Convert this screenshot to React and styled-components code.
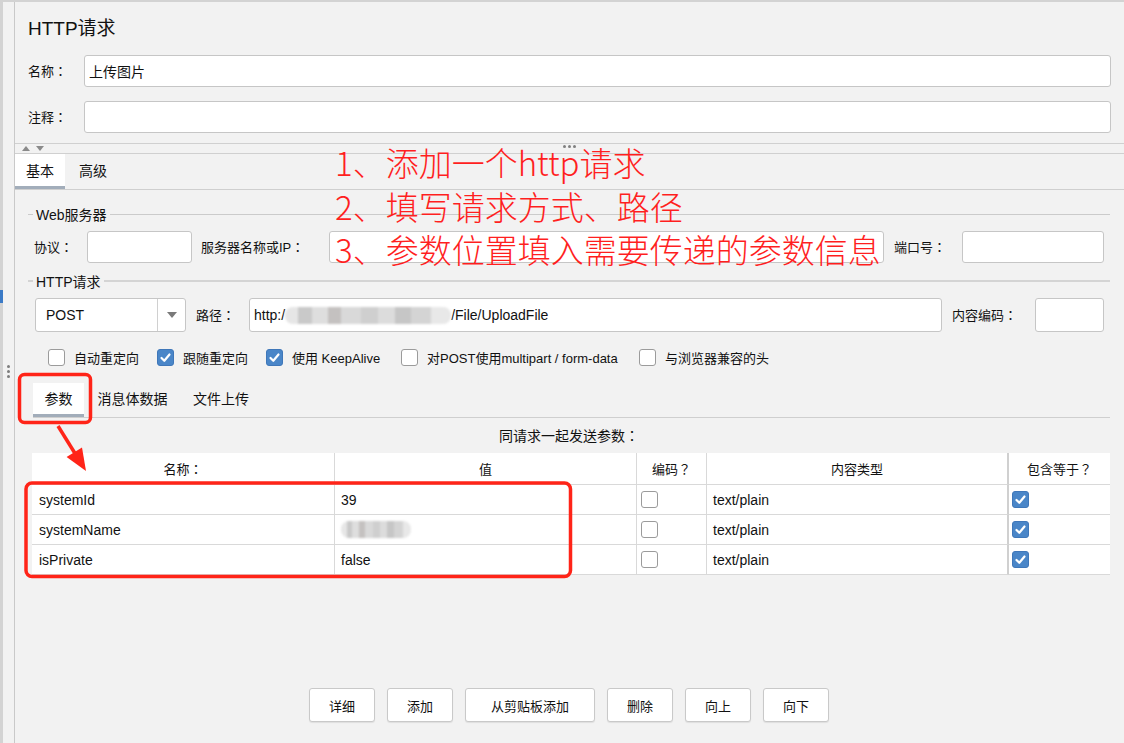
import React from "react";
import styled, { createGlobalStyle } from "styled-components";

const GlobalStyle = createGlobalStyle`
  html, body {
    margin: 0;
    padding: 0;
    background: #f2f2f2;
  }
  body {
    font-family: "Liberation Sans", "Noto Sans CJK SC", sans-serif;
    color: #111;
  }
  * {
    box-sizing: border-box;
  }
`;

const Page = styled.div`
  position: relative;
  width: 1124px;
  height: 743px;
  display: flex;
  border-top: 2px solid #d3d3d3;
  background: #f2f2f2;
  overflow: hidden;
`;

const Rail = styled.div`
  position: relative;
  flex: none;
  width: 15px;
  border-left: 3px solid #d3d3d3;
  border-right: 1px solid #c9c9c9;
  display: flex;
  flex-direction: column;
  align-items: center;

  &::before {
    content: "";
    position: absolute;
    left: -3px;
    top: 288px;
    width: 3px;
    height: 13px;
    background: #3b7ac6;
  }
`;

const RailGrip = styled.div`
  margin-top: 363px;
  display: flex;
  flex-direction: column;
  gap: 2px;
  > span {
    width: 3px;
    height: 3px;
    border-radius: 50%;
    background: #7d7d7d;
  }
`;

const Main = styled.div`
  flex: 1;
  min-width: 0;
  display: flex;
  flex-direction: column;
`;

const Header = styled.div`
  padding: 15px 13px 10px 13px;
`;

const Title = styled.div`
  font-size: 19px;
  line-height: 24px;
  height: 24px;
`;

const Row = styled.div`
  display: flex;
  align-items: center;
  margin-top: ${p => p.top || 0}px;
`;

const Label = styled.span`
  flex: none;
  width: ${p => p.w}px;
  margin-left: ${p => p.ml || 0}px;
  padding-bottom: 2px;
  font-size: 13px;
  white-space: nowrap;
`;

// full-width punctuation sits centred in its cell, as in the Swing UI
const Punct = styled.span`
  font-family: "Noto Sans CJK TC", "Noto Sans CJK SC", sans-serif;
`;

const TextBox = styled.div`
  flex: ${p => (p.w ? "none" : "1")};
  width: ${p => (p.w ? `${p.w}px` : "auto")};
  height: ${p => p.h || 32}px;
  display: flex;
  align-items: center;
  padding: 0 4px;
  background: #fff;
  border: 1px solid #c6c6c6;
  border-radius: 3px;
  font-size: 14px;
  white-space: nowrap;
  overflow: hidden;
`;

const Redacted = styled.span`
  display: inline-block;
  width: ${p => p.w}px;
  height: 17px;
  border-radius: 8px;
  background: linear-gradient(
    90deg,
    #e6e6e6 0 8%,
    #c9c9c9 8% 16%,
    #dedede 16% 26%,
    #c4c1c0 26% 34%,
    #d9d9d9 34% 46%,
    #cfcfcf 46% 56%,
    #dcdcdc 56% 66%,
    #c6c6c6 66% 76%,
    #d4d4d4 76% 88%,
    #e8e8e8 88% 100%
  );
  filter: blur(1.2px);
`;

const SplitBar = styled.div`
  height: 11px;
  border-top: 1px solid #d0d0d0;
  border-bottom: 1px solid #d0d0d0;
  display: grid;
  grid-template-columns: 1fr auto 1fr;
  align-items: center;
`;

const Arrows = styled.div`
  display: flex;
  gap: 6px;
  padding-left: 7px;
`;

const Tri = styled.span`
  width: 0;
  height: 0;
  border-left: 4px solid transparent;
  border-right: 4px solid transparent;
  ${p =>
    p.down
      ? "border-top: 5px solid #8a8a8a;"
      : "border-bottom: 5px solid #8a8a8a;"}
`;

const Dots = styled.div`
  display: flex;
  gap: 2px;
  margin-top: -4px;
  > span {
    width: 3px;
    height: 3px;
    border-radius: 50%;
    background: #808080;
  }
`;

const TabBar = styled.div`
  display: flex;
  height: 36px;
  border-bottom: 1px solid #cfcfcf;
`;

const Tab = styled.div`
  width: ${p => p.w}px;
  display: flex;
  align-items: center;
  justify-content: center;
  padding-bottom: 4px;
  font-size: 14px;
  background: ${p => (p.active ? "#fff" : "transparent")};
  box-shadow: ${p => (p.active ? "inset 0 -3px 0 #a2adba" : "none")};
`;

const Body = styled.div`
  flex: 1;
  display: flex;
  flex-direction: column;
  padding: 0 14px 21px 13px;
`;

const Group = styled.div`
  margin-top: ${p => p.top}px;
  padding: 0 6px;
`;

const GroupHead = styled.div`
  display: flex;
  align-items: center;
  height: 20px;
  margin: 0 -6px;
  font-size: 14px;

  &::before,
  &::after {
    content: "";
    height: ${p => (p.thick ? 2 : 1)}px;
    background: ${p => (p.thick ? "#d4d4d4" : "#cbcbcb")};
  }
  &::before {
    width: 5px;
  }
  &::after {
    flex: 1;
  }
  > span {
    padding: 0 3px;
  }
`;

const Combo = styled.div`
  flex: none;
  width: 151px;
  height: 34px;
  margin-left: 1px;
  display: flex;
  background: #fff;
  border: 1px solid #c6c6c6;
  border-radius: 3px;
  font-size: 14px;

  > span {
    flex: 1;
    display: flex;
    align-items: center;
    padding-left: 10px;
  }
`;

const ComboArrow = styled.div`
  width: 28px;
  border-left: 1px solid #d0d0d0;
  display: flex;
  align-items: center;
  justify-content: center;

  &::after {
    content: "";
    border-left: 5px solid transparent;
    border-right: 5px solid transparent;
    border-top: 6px solid #7a7a7a;
  }
`;

const CheckRow = styled.div`
  display: flex;
  align-items: center;
  height: 17px;
  margin-top: 17px;
  padding-left: 20px;
`;

const CheckItem = styled.div`
  flex: none;
  width: ${p => (p.w ? `${p.w}px` : "auto")};
  display: flex;
  align-items: center;
  gap: 9px;
  font-size: 13px;
  white-space: nowrap;
`;

const Box = styled.span`
  flex: none;
  width: 17px;
  height: 17px;
  border-radius: 3px;
  border: 1px solid ${p => (p.checked ? "#3f77b9" : "#9b9b9b")};
  background: ${p => (p.checked ? "#4a86c8" : "#fff")};
  display: inline-flex;
  align-items: center;
  justify-content: center;
`;

const Check = ({ checked }) => (
  <Box checked={checked}>
    {checked && (
      <svg width="13" height="13" viewBox="0 0 13 13">
        <polyline
          points="2.5,7 5.3,9.8 10.5,3.5"
          fill="none"
          stroke="#fff"
          strokeWidth="2.2"
          strokeLinecap="round"
          strokeLinejoin="round"
        />
      </svg>
    )}
  </Box>
);

const SubTabs = styled(TabBar)`
  margin-top: 17px;
  height: 35px;
  margin-left: 5px;
`;

const Caption = styled.div`
  height: 35px;
  line-height: 35px;
  text-align: center;
  font-size: 14px;
`;

const Grid = styled.div`
  display: grid;
  grid-template-columns: 303px 302px 70px 302px 101px;
  width: 1078px;
  margin-left: 4px;
  background: #fff;
`;

const divider = p =>
  p.last ? "none" : p.thick ? "2px solid #d0d0d0" : "1px solid #d9d9d9";

const HeadCell = styled.div`
  height: 32px;
  display: flex;
  align-items: center;
  justify-content: center;
  font-size: 13px;
  border-bottom: 1px solid #d9d9d9;
  border-right: ${divider};
`;

const Cell = styled.div`
  height: 30px;
  display: flex;
  align-items: center;
  padding-left: ${p => (p.pad === undefined ? 6 : p.pad)}px;
  font-size: 14px;
  border-bottom: 1px solid #d9d9d9;
  border-right: ${divider};
`;

const ButtonRow = styled.div`
  margin-top: auto;
  display: flex;
  justify-content: center;
  gap: 12px;
`;

const Button = styled.div`
  width: ${p => p.w || 66}px;
  height: 34px;
  display: flex;
  align-items: center;
  justify-content: center;
  background: #fff;
  border: 1px solid #c9c9c9;
  border-radius: 3px;
  box-shadow: 0 1px 1px rgba(0, 0, 0, 0.08);
  font-size: 13px;
`;

const Overlay = styled.div`
  position: absolute;
  inset: -2px 0 0 0;
  pointer-events: none;
`;

const Notes = styled.div`
  position: absolute;
  left: 335px;
  top: 141px;
  font-family: "Noto Sans CJK SC", "Liberation Sans", sans-serif;
  font-size: 33px;
  font-weight: 300;
  line-height: 43.5px;
  color: #ff1f1f;
  white-space: nowrap;
`;

const Marks = styled.svg`
  position: absolute;
  left: 0;
  top: 0;
`;

const params = [
  { name: "systemId", value: "39" },
  { name: "systemName", value: null },
  { name: "isPrivate", value: "false" }
];

const buttons = [
  { label: "详细" },
  { label: "添加" },
  { label: "从剪贴板添加", w: 130 },
  { label: "删除" },
  { label: "向上" },
  { label: "向下" }
];

const C = () => <Punct>：</Punct>;
const Q = () => <Punct>？</Punct>;

export default function App() {
  return (
    <>
      <GlobalStyle />
      <Page>
        <Rail>
          <RailGrip>
            <span />
            <span />
            <span />
          </RailGrip>
        </Rail>
        <Main>
          <Header>
            <Title>HTTP请求</Title>
            <Row top={14}>
              <Label w={56}>
                名称<C />
              </Label>
              <TextBox>上传图片</TextBox>
            </Row>
            <Row top={14}>
              <Label w={56}>
                注释<C />
              </Label>
              <TextBox />
            </Row>
          </Header>

          <SplitBar>
            <Arrows>
              <Tri />
              <Tri down />
            </Arrows>
            <Dots>
              <span />
              <span />
              <span />
            </Dots>
            <div />
          </SplitBar>

          <TabBar>
            <Tab w={50} active>
              基本
            </Tab>
            <Tab w={56}>高级</Tab>
          </TabBar>

          <Body>
            <Group top={14}>
              <GroupHead>
                <span>Web服务器</span>
              </GroupHead>
              <Row top={7}>
                <Label w={53}>
                  协议<C />
                </Label>
                <TextBox w={105} />
                <Label w={128} ml={9}>
                  服务器名称或IP<C />
                </Label>
                <TextBox w={555} />
                <Label w={68} ml={10}>
                  端口号<C />
                </Label>
                <TextBox />
              </Row>
            </Group>

            <Group top={8}>
              <GroupHead thick>
                <span>HTTP请求</span>
              </GroupHead>
              <Row top={7}>
                <Combo>
                  <span>POST</span>
                  <ComboArrow />
                </Combo>
                <Label w={53} ml={10}>
                  路径<C />
                </Label>
                <TextBox w={693} h={34}>
                  http:/
                  <Redacted w={166} />
                  /File/UploadFile
                </TextBox>
                <Label w={83} ml={10}>
                  内容编码<C />
                </Label>
                <TextBox h={34} />
              </Row>
            </Group>

            <CheckRow>
              <CheckItem w={109}>
                <Check />
                自动重定向
              </CheckItem>
              <CheckItem w={109}>
                <Check checked />
                跟随重定向
              </CheckItem>
              <CheckItem w={135}>
                <Check checked />
                使用 KeepAlive
              </CheckItem>
              <CheckItem w={238}>
                <Check />
                对POST使用multipart / form-data
              </CheckItem>
              <CheckItem>
                <Check />
                与浏览器兼容的头
              </CheckItem>
            </CheckRow>

            <SubTabs>
              <Tab w={51} active>
                参数
              </Tab>
              <Tab w={97}>消息体数据</Tab>
              <Tab w={80}>文件上传</Tab>
            </SubTabs>

            <Caption>
              同请求一起发送参数<C />
            </Caption>

            <Grid>
              <HeadCell>
                名称<C />
              </HeadCell>
              <HeadCell>值</HeadCell>
              <HeadCell>
                编码<Q />
              </HeadCell>
              <HeadCell thick>内容类型</HeadCell>
              <HeadCell last>
                包含等于<Q />
              </HeadCell>
              {params.map(p => (
                <React.Fragment key={p.name}>
                  <Cell pad={7}>{p.name}</Cell>
                  <Cell>{p.value ?? <Redacted w={70} />}</Cell>
                  <Cell pad={4}>
                    <Check />
                  </Cell>
                  <Cell thick>text/plain</Cell>
                  <Cell last pad={3}>
                    <Check checked />
                  </Cell>
                </React.Fragment>
              ))}
            </Grid>

            <ButtonRow>
              {buttons.map(b => (
                <Button key={b.label} w={b.w}>
                  {b.label}
                </Button>
              ))}
            </ButtonRow>
          </Body>
        </Main>

        <Overlay>
          <Notes>
            <div>1、添加一个http请求</div>
            <div>2、填写请求方式、路径</div>
            <div>3、参数位置填入需要传递的参数信息</div>
          </Notes>
          <Marks width="1124" height="743" viewBox="0 0 1124 743">
            <rect
              x="19.5"
              y="374.5"
              width="71"
              height="48"
              rx="5"
              fill="none"
              stroke="#ff2418"
              strokeWidth="3.5"
            />
            <rect
              x="26"
              y="483"
              width="544.5"
              height="93.5"
              rx="6"
              fill="none"
              stroke="#ff2418"
              strokeWidth="3.5"
            />
            <line
              x1="58"
              y1="426"
              x2="76"
              y2="455"
              stroke="#ff2418"
              strokeWidth="3.5"
            />
            <polygon points="86,471 66.6,457 82,447.5" fill="#ff2418" />
          </Marks>
        </Overlay>
      </Page>
    </>
  );
}
